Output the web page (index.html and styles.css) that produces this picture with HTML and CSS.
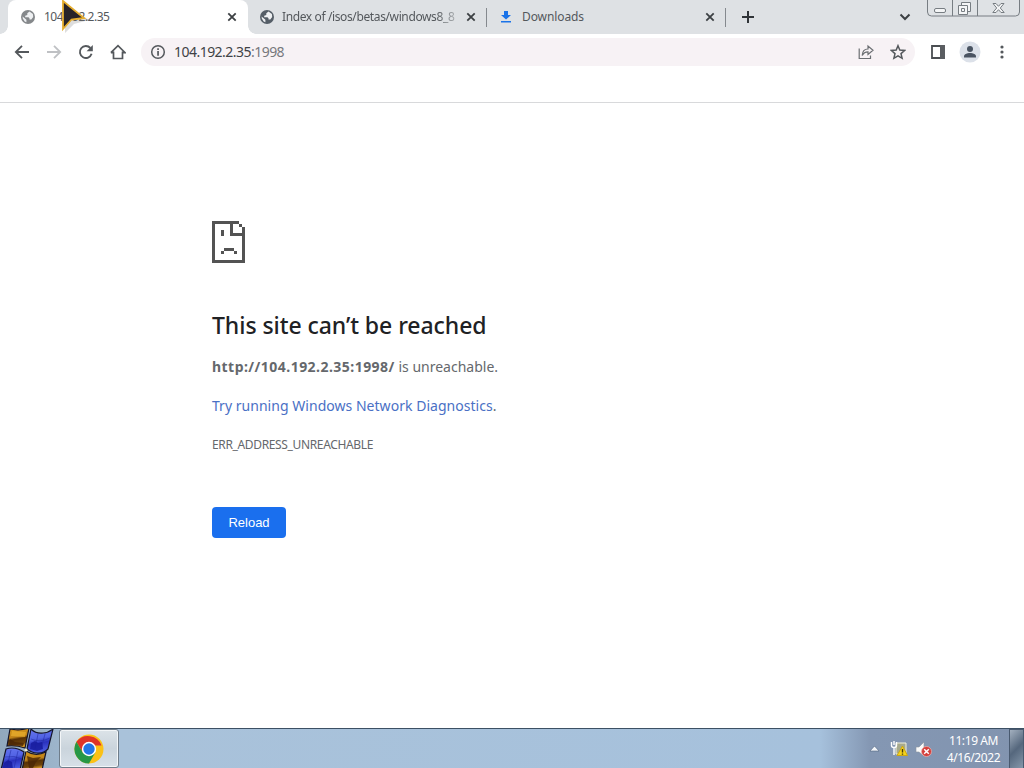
FILE: index.html
```html
<!DOCTYPE html>
<html lang="en">
<head>
<meta charset="utf-8">
<title>104.192.2.35</title>
<link rel="stylesheet" href="styles.css">
</head>
<body>
<svg class="defs" width="0" height="0">
  <defs>
    <symbol id="globe" viewBox="0 0 16 16"><circle cx="8" cy="8" r="7"/><path d="M9.500 2.600 7.300 4.200v1.700L5.200 6.800v1.400h3.300l1 1.100v1.300h1.800l1.900-2.500-.3-3zM2.600 7.500l3.800 3.200v2.500l-1.700-.8-1.900-2.800z" fill="#eef0f2"/></symbol>
    <symbol id="close" viewBox="0 0 10 10"><path d="M1.300 1.300l7.400 7.400M8.700 1.300 1.300 8.700" fill="none" stroke="#3c4043" stroke-width="1.800"/></symbol>
  </defs>
</svg>
<header class="tabstrip">
  <div class="tab active"><svg class="favicon gray"><use href="#globe"/></svg><span class="label t1">104.192.2.35</span><svg class="close"><use href="#close"/></svg></div>
  <div class="tab"><svg class="favicon"><use href="#globe"/></svg><span class="label t2">Index of /isos/betas/windows8_8</span><svg class="close"><use href="#close"/></svg></div>
  <div class="tab third"><svg class="favicon" viewBox="0 0 16 16"><path d="M6 2h4v4h3L8 10.500 3 6h3zM3 12h10v1.600H3z" fill="#1a73e8"/></svg><span class="label t3">Downloads</span><svg class="close"><use href="#close"/></svg></div>
  <svg class="plus" viewBox="0 0 12 12"><path d="M6 0v12M0 6h12" stroke="#303438" stroke-width="2"/></svg>
  <svg class="chevron" viewBox="0 0 12 8"><path d="M1.500 1.500 6 6l4.500-4.500" fill="none" stroke="#3c4043" stroke-width="2"/></svg>
  <svg class="winbuttons" width="94" height="18" viewBox="0 0 94 18" fill="none" stroke="#777d82">
    <path d="M.5 0v12q0 4 4 4h84q4 0 4-4V0M25.500 0v16M50.500 0v16" fill="#dfe2e5"/>
    <rect x="7.500" y="8.500" width="11" height="4" rx="1.500" fill="#f4f5f6"/>
    <path d="M34.500 2.500h9v9h-9z" fill="#f4f5f6"/><path d="M31.500 5.500h9v9h-9z" fill="#f4f5f6"/><path d="M34.500 8.500h3v3h-3z"/>
    <path d="M66 3.500h3l2.500 2.800L74 3.500h3L73.300 8l3.900 4.500h-3.200l-2.500-2.800-2.500 2.800h-3.200L69.700 8z" fill="#f4f5f6"/>
  </svg>
</header>
<nav class="toolbar">
  <svg class="nav" viewBox="0 0 16 16"><path d="M15 8H2M8 1.800 1.800 8 8 14.200" fill="none" stroke="#54585c" stroke-width="1.800"/></svg>
  <svg class="nav" viewBox="0 0 16 16"><path d="M1 8h13M8 1.800 14.200 8 8 14.200" fill="none" stroke="#bfc1c4" stroke-width="1.800"/></svg>
  <svg class="nav" viewBox="0 0 16 16"><path d="M13.600 9.800A6 6 0 1 1 12.400 4" fill="none" stroke="#54585c" stroke-width="1.900"/><path d="M14.800 1v6.200H8.600z" fill="#54585c"/></svg>
  <svg class="nav" viewBox="0 0 16 16"><path d="M3.500 7.500v7h9v-7M.9 8.700 8 1.600l7.100 7.100H12.500M.9 8.700H3.500" fill="none" stroke="#54585c" stroke-width="1.700"/></svg>
  <div class="address">
    <svg class="info" viewBox="0 0 16 16"><circle cx="8" cy="8" r="6.300" fill="none" stroke="#54585c" stroke-width="1.500"/><path d="M7.200 4.200h1.700v1.700H7.200zM7.200 7h1.700v4.700H7.200z" fill="#54585c"/></svg>
    <span class="url">104.192.2.35<span>:1998</span></span>
    <svg class="share" viewBox="0 0 16 16" fill="none" stroke="#6b6e72" stroke-width="1.200"><path d="M1.200 4.500v10h11.300v-3M4.200 11.500c.2-4 2.300-6.500 5.800-6.500V2l5 4.300-5 4.200V7.800c-2.500 0-4.500 1-5.800 3.700z"/></svg>
    <svg class="star" viewBox="0 0 16 16"><path d="m8 1.700 1.800 4.400 4.800.4L11 9.600l1.100 4.700L8 11.800l-4.100 2.500L5 9.600 1.400 6.500l4.800-.4z" fill="none" stroke="#54585c" stroke-width="1.500"/></svg>
  </div>
  <svg class="panel" viewBox="0 0 14 14"><path d="M1 1h12v12H1z" fill="#fff" stroke="#4b4e52" stroke-width="1.800"/><path d="M9 0h5v14H9z" fill="#5a5d61"/></svg>
  <svg class="profile" viewBox="0 0 22 22"><circle cx="11" cy="11" r="10.500" fill="#dce1e9"/><circle cx="11" cy="8" r="3" fill="#4a5462"/><path d="M5 16.500v-1.200c0-2 3-3.300 6-3.300s6 1.300 6 3.300v1.200z" fill="#4a5462"/></svg>
  <svg class="more" viewBox="0 0 4 14" fill="#54585c"><circle cx="2" cy="2" r="1.600"/><circle cx="2" cy="7" r="1.600"/><circle cx="2" cy="12" r="1.600"/></svg>
</nav>
<div class="bookmarks"></div>
<main>
  <svg class="sad" width="33" height="42" viewBox="0 0 33 42" fill="#535353" shape-rendering="crispEdges"><path d="M0 0h27v3H0zM0 0h3v42H0zM0 39h33v3H0zM30 6h3v36h-3zM27 3h3v3h-3zM18 0h3v15h-3zM18 12h15v3H18zM9 9h3v6H9zM12 27h10v3H12zM9 30h3v3H9zM22 30h3v3h-3z"/></svg>
  <h1>This site can’t be reached</h1>
  <p class="reason"><b>http://104.192.2.35:1998/</b> is unreachable.</p>
  <p class="diag"><a>Try running Windows Network Diagnostics</a>.</p>
  <p class="code">ERR_ADDRESS_UNREACHABLE</p>
  <button>Reload</button>
</main>
<footer class="taskbar">
  <svg class="start" width="58" height="40" viewBox="0 0 58 40">
    <defs><linearGradient id="gold" x2=".2" y2="1"><stop stop-color="#d99a1c"/><stop offset=".5" stop-color="#c08318"/><stop offset=".62" stop-color="#573105"/><stop offset=".85" stop-color="#6e430a"/><stop offset="1" stop-color="#d89b25"/></linearGradient><linearGradient id="blue" x2=".2" y2="1"><stop stop-color="#6676ef"/><stop offset=".45" stop-color="#5263e4"/><stop offset=".65" stop-color="#2a31bd"/><stop offset="1" stop-color="#4a5be0"/></linearGradient></defs>
    <g stroke="#14142a" stroke-width="1.200"><path d="M10 0q10 2 19-1l-4 20q-9-3-18-2z" fill="url(#gold)"/><path d="M31 0q5 5 12 4 5 0 10-4l-5 20q-5 5-11 4-5 0-10-4z" fill="url(#blue)"/><path d="M6 20q9-3 18 3l-4 18H1z" fill="url(#blue)"/><path d="M26 22q9 6 20 1l-4 18H22z" fill="url(#gold)"/></g>
    <g fill="none" stroke="#2029a3" stroke-opacity=".55"><path d="M38 5l-3 15M45 5l-4 15M31 10q9 4 19-1M11 21 7 38M18 22l-4 17M5 28q9-2 17 2"/></g>
    <path d="m31 14 4-2 3 2 4-1 1 7-6 2-7-2zM4 34l4-3 4 2 1 7H2z" fill="#171c9d" opacity=".85"/>
    <path d="m10 10 5 3 9 1-1 3-14-1zM27 27l6 2 8-1-5 5-3 6h-4z" fill="#4a2605" opacity=".8"/>
    <path d="m12 2 14 1-1 5-14-1z" fill="#e9b12f" opacity=".7"/>
    <circle cx="26" cy="21" r="1.500" fill="#f2ecc8"/>
  </svg>
  <div class="task"><svg width="30" height="30" viewBox="0 0 30 30"><circle cx="15" cy="15" r="14.500" fill="#fbc116"/><path d="M15 15 21.300 11.400H27.600A14.500 14.500 0 0 0 2.440 7.750L8.700 18.600z" fill="#df3428"/><path d="M2.440 7.750A14.500 14.500 0 0 0 15 29.500L21.300 18.600 15 15 8.700 18.600z" fill="#269746"/><circle cx="15" cy="15" r="7.200" fill="#fff"/><circle cx="15" cy="15" r="5.700" fill="#2376e5"/></svg></div>
  <svg class="tray" width="66" height="20" viewBox="0 0 66 20">
    <path d="M1 12 5.500 7l4.500 5z" fill="#f2f5f9" stroke="#53657f" stroke-width=".6"/>
    <path d="M27 4h10v11H27z" fill="#a7aa8e" stroke="#f3f2dc"/><path d="M22.500 3v3.500q0 2 2.500 2t2.500-2V3M25 9v7M25 2v4" stroke="#fff" stroke-width="1.400" fill="none"/><path d="m33.500 7 5 9.500H28z" fill="#f5d31b" stroke="#cba713"/><path d="M32.800 10h1.400v3.500h-1.400zM32.800 14.500h1.400v1.200h-1.400z" fill="#443b12"/>
    <path d="M47 8h3l5-5v14l-5-4h-3z" fill="#fafafa" stroke="#8c94a0" stroke-width=".6"/><circle cx="57.500" cy="12.500" r="5" fill="#d43f3b" stroke="#f0b5af" stroke-width=".7"/><path d="m55.200 10.200 4.600 4.600M59.800 10.200l-4.600 4.600" stroke="#fff" stroke-width="1.500"/>
  </svg>
  <div class="clock"><span class="time">11:19 AM</span><span class="date">4/16/2022</span></div>
  <div class="desktop"></div>
</footer>
<svg class="cursor" width="32" height="34" viewBox="0 0 32 34"><path d="M3 2v29l9-9 15-4z" fill="#777" opacity=".25" transform="translate(1 2)"/><path d="M2 1v28l8.500-9.500L23 18z" fill="#272328" stroke="#e5ad2e" stroke-width="1.800"/></svg>
</body>
</html>
```
FILE: styles.css
```css
* { box-sizing: border-box; }
body { margin: 0; width: 1024px; height: 768px; overflow: hidden; display: flex; flex-direction: column; background: #fff; font-family: "Noto Sans", "Open Sans", sans-serif; color: #65686c; }
svg { display: block; flex: none; }
.defs { position: absolute; }
.tabstrip { height: 34px; flex: none; display: flex; background: #dee1e4; padding-left: 8px; position: relative; }
.tab { width: 239px; height: 34px; display: flex; align-items: center; padding: 0 11px 0 12px; position: relative; color: #54585c; }
.tab.active { width: 240px; background: #fff; border-radius: 8px 8px 0 0; }
.tab:not(.active)::after { content: ""; position: absolute; right: 0; top: 8px; height: 19px; border-right: 1px solid #85898e; }
.tab.active::before, .tab.active::after { content: ""; position: absolute; bottom: 0; width: 8px; height: 8px; }
.tab.active::before { left: -8px; background: radial-gradient(circle at 0 0, transparent 7.500px, #fff 8px); }
.tab.active::after { right: -8px; background: radial-gradient(circle at 100% 0, transparent 7.500px, #fff 8px); }
.favicon { width: 16px; height: 16px; margin-right: 8px; fill: #555e67; }
.favicon.gray { fill: #85888b; }
.tab:not(.active) .favicon { margin-left: -1px; }
.label { font-size: 12px; white-space: nowrap; line-height: 18px; flex: 1; }
.t1 { letter-spacing: -.5px; }
.t2 { flex: 0 0 175px; letter-spacing: -.38px; margin-left: -1px; -webkit-mask: linear-gradient(90deg, #000 88%, rgba(0,0,0,.3)); }
.t3 { letter-spacing: -.1px; }
.close { width: 10px; height: 10px; margin-left: auto; }
.plus { width: 12px; height: 12px; margin: 11px 0 0 16px; }
.chevron { width: 12px; height: 8px; margin: 13px 0 0 145px; }
.winbuttons { margin-left: 16px; }
.toolbar { height: 36px; flex: none; display: flex; align-items: center; padding-left: 14px; }
.nav { width: 16px; height: 16px; margin-right: 16px; }
.address { width: 774px; height: 28px; margin-left: -1px; border-radius: 14px; background: #f7f2f5; display: flex; align-items: center; padding: 0 9px; }
.info { width: 16px; height: 16px; margin-right: 8px; }
.url { font-size: 14px; line-height: 20px; letter-spacing: -.53px; color: #404246; }
.url span { color: #77797d; }
.share { width: 16px; height: 16px; margin-left: auto; margin-right: 16px; }
.star { width: 16px; height: 16px; }
.panel { width: 14px; height: 14px; margin-left: 16px; }
.profile { width: 22px; height: 22px; margin-left: 14px; }
.more { width: 4px; height: 14px; margin-left: 19px; }
.bookmarks { height: 33px; flex: none; border-bottom: 1px solid #d8d9db; }
main { height: 625px; flex: none; padding: 118px 0 0 212px; }
h1 { margin: 46px 0 0; font-size: 23px; line-height: 32px; font-weight: 500; letter-spacing: -.06px; color: #202124; }
p { margin: 0; white-space: nowrap; font-size: 14px; line-height: 20px; }
.reason { margin-top: 16px; }
.reason b { letter-spacing: .46px; }
.diag { margin-top: 19px; letter-spacing: .03px; }
.diag a { color: #4a70c5; }
.code { margin-top: 19px; font-size: 12px; letter-spacing: -.35px; }
button { display: block; width: 74px; height: 31px; margin-top: 52px; border: 0; border-radius: 4px; padding: 0; background: #1a6fee; color: #fff; font: 13px/31px "Liberation Sans", sans-serif; }
.taskbar { height: 40px; flex: none; display: flex; background: linear-gradient(90deg, #91a8bd 0, #a9c2da 120px, #a6c1dc 820px, #8497b3 870px, #8294af 100%); border-top: 1px solid #3c5064; }
.start { margin-right: 1px; }
.task { width: 60px; height: 39px; border: 1px solid #6f7d8a; box-shadow: inset 0 0 0 1px #f3f6f8; border-radius: 3px; background: linear-gradient(#dce3e8, #cad4dc 50%, #d7e0e8); display: flex; align-items: center; justify-content: center; }
.tray { margin: 10px 0 0 750px; }
.clock { width: 74px; margin-top: 3px; padding-left: 3px; display: flex; flex-direction: column; align-items: center; color: #fff; font-size: 12px; line-height: 17px; letter-spacing: -.4px; }
.desktop { width: 15px; height: 39px; border: 1px solid #495a70; border-bottom: 0; background: linear-gradient(135deg, #a3b0bf, #55677d 50%, #8597aa); }
.cursor { position: absolute; left: 61px; top: 0; }
```
